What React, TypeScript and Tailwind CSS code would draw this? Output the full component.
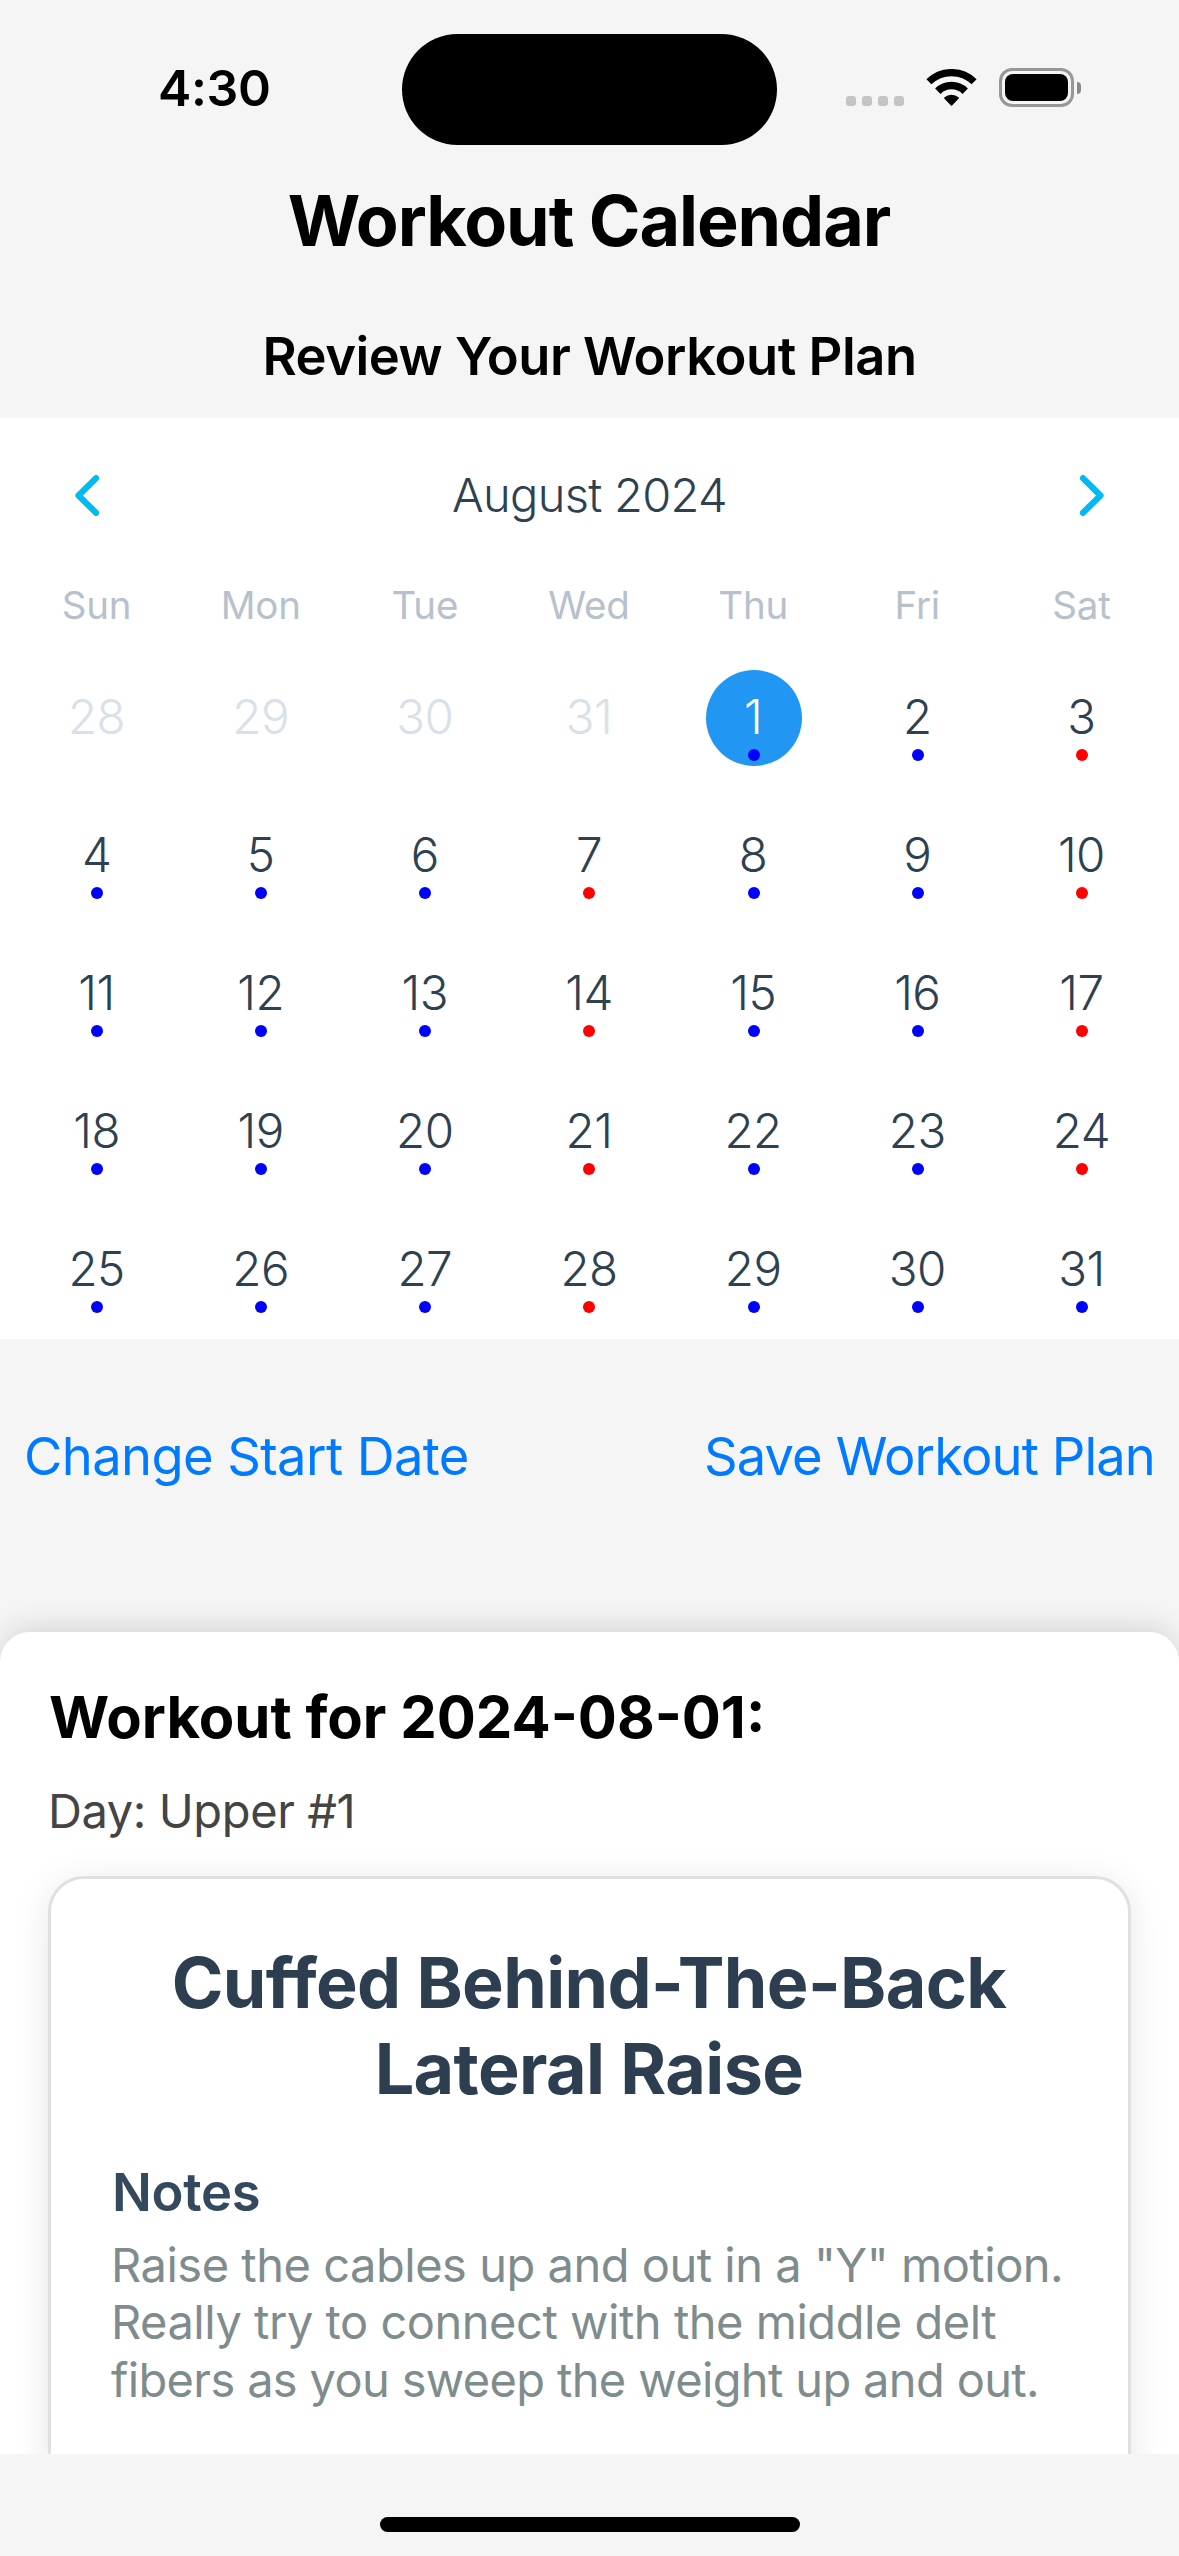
import clsx from "clsx";

type Marker = "blue" | "red";
type Day = { label: number; marker?: Marker; outside?: boolean; selected?: boolean };

const WEEKDAYS = ["Sun", "Mon", "Tue", "Wed", "Thu", "Fri", "Sat"];

const REST_DAYS = [3, 7, 10, 14, 17, 21, 24, 28];

const DAYS: Day[] = [
  ...[28, 29, 30, 31].map((label) => ({ label, outside: true })),
  ...Array.from({ length: 31 }, (_, i): Day => ({
    label: i + 1,
    marker: REST_DAYS.includes(i + 1) ? "red" : "blue",
    selected: i === 0,
  })),
];

function WifiIcon() {
  return (
    <svg width="51" height="38" viewBox="0 0 51 38" fill="none" stroke="black">
      <path d="M2.9 12.8A32.3 32.3 0 0 1 48.1 12.8" strokeWidth="7.2" />
      <path d="M11.8 22.2A19.4 19.4 0 0 1 39.2 22.2" strokeWidth="7.6" />
      <path
        d="M18.8 29.1A10 10 0 0 1 32.2 29.1L25.5 36Z"
        fill="black"
        strokeWidth="1.5"
        strokeLinejoin="round"
      />
    </svg>
  );
}

function BatteryIcon() {
  return (
    <div className="flex items-center gap-[3px]">
      <div className="h-[39px] w-[75px] rounded-[13px] border-[3px] border-[#979797] p-[3px]">
        <div className="h-full w-full rounded-[8px] bg-black" />
      </div>
      <div className="h-3 w-1 rounded-r-full bg-[#8a8a8a]" />
    </div>
  );
}

function StatusBar() {
  return (
    <div className="flex h-[178px] items-start">
      <div className="flex w-[402px] justify-start pt-[57px] pl-[158px]">
        <span className="text-[50px] leading-[62px] font-semibold tracking-[-0.35px]">4:30</span>
      </div>
      <div className="mt-[33.5px] h-[111px] w-[375px] rounded-full bg-black" />
      <div className="mt-[68px] ml-[69px] flex items-start">
        <div className="mt-[28px] flex gap-[6px]">
          {[0, 1, 2, 3].map((i) => (
            <div key={i} className="h-[10px] w-[10px] rounded-[3px] bg-[#c4c4c4]" />
          ))}
        </div>
        <div className="mt-px ml-[22px]">
          <WifiIcon />
        </div>
        <div className="ml-[22px]">
          <BatteryIcon />
        </div>
      </div>
    </div>
  );
}

function Chevron({ flipped }: { flipped?: boolean }) {
  return (
    <svg width="24" height="41" viewBox="0 0 24 41" className={clsx(flipped && "rotate-180")}>
      <path
        d="M21 3.2L3.5 20.5L21 37.8"
        fill="none"
        stroke="#00bbf2"
        strokeWidth="6.2"
        strokeLinecap="round"
        strokeLinejoin="round"
      />
    </svg>
  );
}

function DayCell({ day }: { day: Day }) {
  return (
    <div className="flex h-[138px] justify-center">
      <div
        className={clsx(
          "flex size-24 flex-col items-center rounded-full pt-[18px]",
          day.selected && "bg-[#2196f3]",
        )}
      >
        <span
          className={clsx(
            "pr-px text-[47.5px] leading-[58px] font-light tracking-[-0.5px]",
            day.selected && "text-white",
            day.outside && "text-[#d9e1e8]",
            !day.selected && !day.outside && "text-[#2d4150]",
          )}
        >
          {day.label}
        </span>
        {day.marker && (
          <div
            className={clsx(
              "mt-[3px] size-3 shrink-0 rounded-full",
              day.marker === "red" ? "bg-[#ff0000]" : "bg-[#0000ff]",
            )}
          />
        )}
      </div>
    </div>
  );
}

function Calendar() {
  return (
    <section className="h-[921px] bg-white px-[15px]">
      <div className="flex h-[154px] items-center justify-between px-[60px]">
        <Chevron />
        <span className="text-[47px] leading-[58px] font-light tracking-[-0.68px] text-[#2d4150]">
          August 2024
        </span>
        <Chevron flipped />
      </div>
      <div className="grid h-[98px] grid-cols-7 pt-[10px] text-center text-[38.5px] leading-[46px] tracking-[-0.2px] text-[#b6c1cd]">
        {WEEKDAYS.map((name) => (
          <span key={name} className="pr-px">
            {name}
          </span>
        ))}
      </div>
      <div className="grid grid-cols-7">
        {DAYS.map((day, i) => (
          <DayCell key={i} day={day} />
        ))}
      </div>
    </section>
  );
}

function WorkoutSheet() {
  return (
    <section className="h-[822px] rounded-t-[30px] bg-white px-12 pt-[55px] shadow-[0_-6px_30px_rgba(0,0,0,0.12)]">
      <h2 className="pl-px text-[58px] leading-[60px] font-bold">Workout for 2024-08-01:</h2>
      <p className="mt-[35px] text-[47px] leading-[57px] tracking-[-0.4px] text-[#444]">Day: Upper #1</p>
      <article className="mt-[37px] h-[700px] rounded-[36px] border-[3px] border-[#e0e0e0] bg-white px-[60px] pt-[61px] shadow-[0_6px_36px_rgba(0,0,0,0.1)]">
        <h3 className="pr-px text-center text-[70px] leading-[86px] font-bold tracking-[-0.62px] text-[#2c3e50]">
          Cuffed Behind-The-Back
          <br />
          Lateral Raise
        </h3>
        <h4 className="mt-[48px] pl-px text-[52.5px] leading-[64px] font-semibold tracking-[-0.3px] text-[#34495e]">
          Notes
        </h4>
        <p className="mt-[12px] text-[47px] leading-[57.3px] tracking-[-0.48px] whitespace-nowrap text-[#7f8c8d]">
          Raise the cables up and out in a "Y" motion.
          <br />
          Really try to connect with the middle delt
          <br />
          <span className="tracking-[-0.65px]">fibers as you sweep the weight up and out.</span>
        </p>
      </article>
    </section>
  );
}

export default function App() {
  return (
    <main className="flex h-[2556px] w-[1179px] flex-col overflow-hidden bg-[#f5f5f5] font-['Inter',sans-serif] text-black">
      <StatusBar />
      <h1 className="pr-px text-center text-[70px] leading-[86px] font-bold tracking-[-1.06px]">
        Workout Calendar
      </h1>
      <p className="mt-[60px] mb-[30px] text-center text-[52.5px] leading-[64px] font-semibold tracking-[-0.46px]">
        Review Your Workout Plan
      </p>
      <Calendar />
      <div className="flex h-[293px] justify-between px-6 pt-[85px] text-[52.5px] leading-[64px] text-[#007aff]">
        <button className="h-16 tracking-[-0.61px]">Change Start Date</button>
        <button className="h-16 tracking-[-0.89px]">Save Workout Plan</button>
      </div>
      <div className="h-[822px] shrink-0 [clip-path:inset(-80px_0_0_0)]">
        <WorkoutSheet />
      </div>
      <div className="flex justify-center pt-[63px]">
        <div className="h-[15px] w-[420px] rounded-full bg-black" />
      </div>
    </main>
  );
}
